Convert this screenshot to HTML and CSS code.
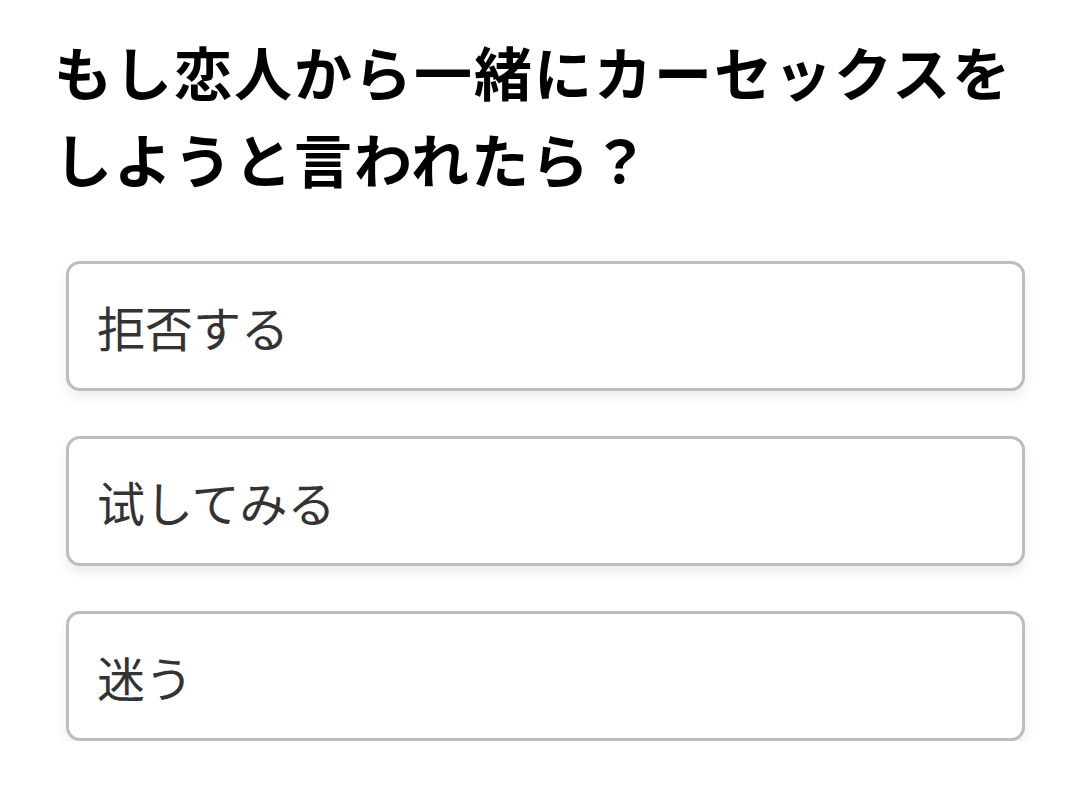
FILE: index.html
```html
<!DOCTYPE html>
<html lang="ja">
<head>
<meta charset="utf-8">
<link rel="stylesheet" href="styles.css">
</head>
<body>
<div class="page">
  <h1 class="question">もし恋人から一緒にカーセックスをしようと言われたら？</h1>
  <div class="options">
    <div class="option">拒否する</div>
    <div class="option">试してみる</div>
    <div class="option">迷う</div>
  </div>
</div>
</body>
</html>
```
FILE: styles.css
```css
html, body {
  margin: 0;
  padding: 0;
  background: #ffffff;
}
.page {
  font-family: "Noto Sans CJK JP", "Noto Sans", sans-serif;
  padding: 28px 40px 0 54px;
}
.question {
  margin: 0;
  font-size: 58px;
  font-weight: 700;
  line-height: 87px;
  letter-spacing: 2px;
  color: #000;
}
.options {
  display: flex;
  flex-direction: column;
  gap: 45px;
  margin-top: 59px;
  margin-left: 12px;
  margin-right: 15px;
}
.option {
  height: 124px;
  box-sizing: content-box;
  border: 3px solid #bdbdbd;
  border-radius: 14px;
  box-shadow: 0 6px 12px rgba(0,0,0,0.08);
  display: flex;
  align-items: center;
  padding: 0 28px;
  font-size: 48px;
  color: #333;
  background: #fff;
}
```
